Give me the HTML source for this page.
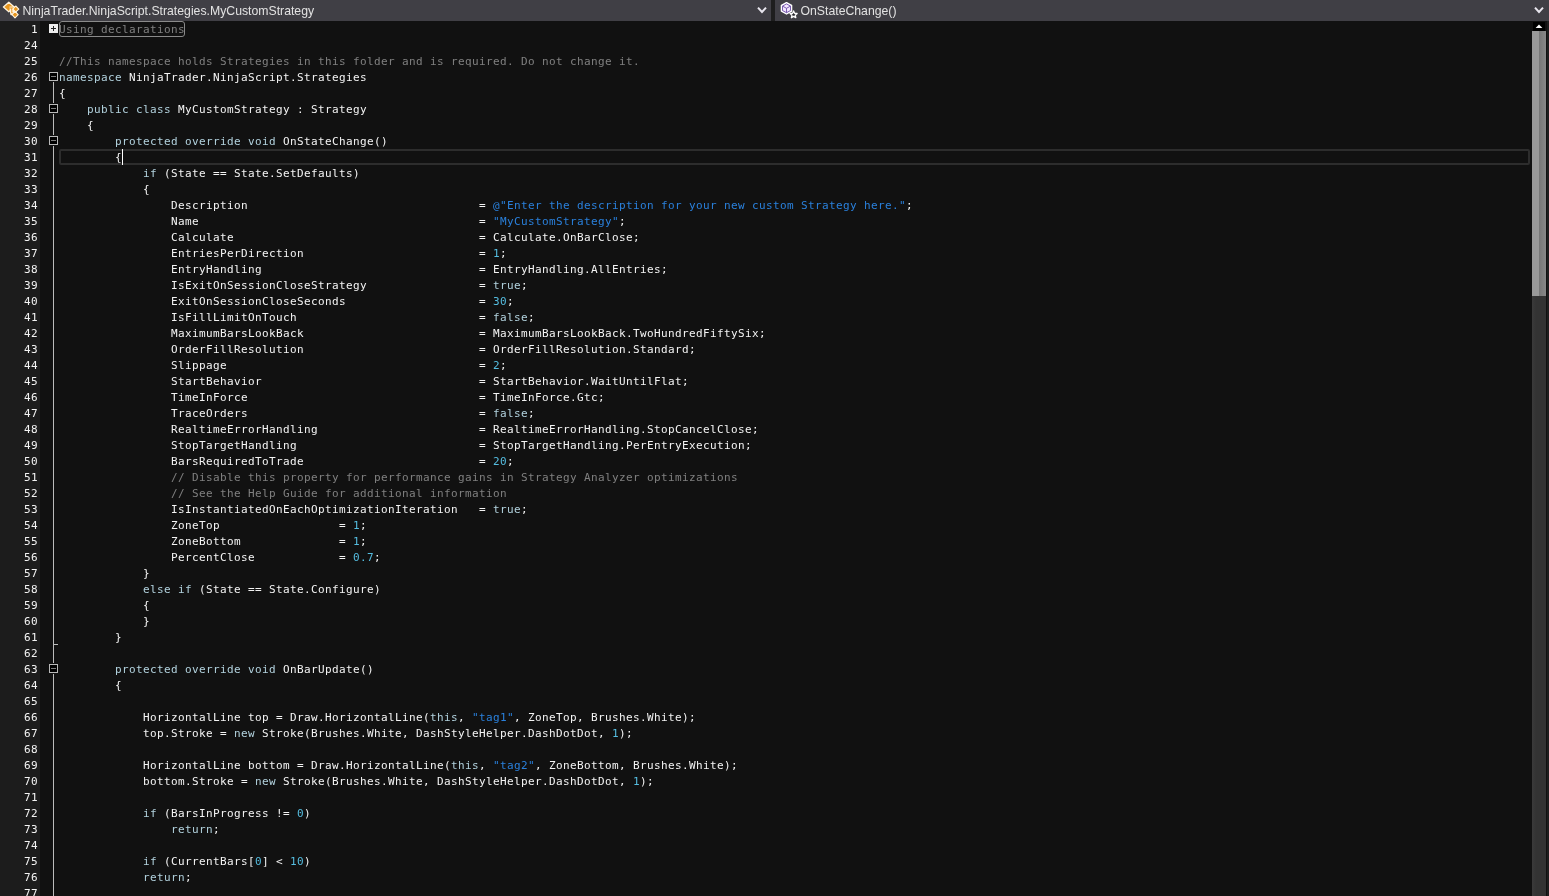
<!DOCTYPE html>
<html><head><meta charset="utf-8"><title>NinjaScript Editor</title>
<style>
html,body{margin:0;padding:0;background:#111;}
body{width:1549px;height:896px;overflow:hidden;position:relative;font-family:"DejaVu Sans Mono","Liberation Mono",monospace;}
#hdr{position:absolute;left:0;top:0;width:1549px;height:21px;background:#403f45;will-change:transform;transform:translateZ(0);}
#hdr .sep{position:absolute;left:771px;top:0;width:4px;height:21px;background:#1e1e1e;}
#hdr svg{position:absolute;left:0;top:0;}
#hdr .t{position:absolute;top:4px;font-family:"Liberation Sans",sans-serif;font-size:12.25px;color:#e2e2e2;line-height:15px;white-space:nowrap;}
#gut{position:absolute;left:0;top:21px;width:40px;height:875px;background:#1c1c1c;}
#ed{position:absolute;left:0;top:22px;width:1532px;will-change:transform;transform:translateZ(0);}
.row{height:16px;line-height:16px;white-space:pre;position:relative;font-size:11px;letter-spacing:0.378px;color:#f4f4f4;}
.ln{position:absolute;left:0;width:38px;text-align:right;color:#f4f4f4;}
.code{position:absolute;left:59px;}
.k{color:#b2d2de}.s{color:#2a80dc}.n{color:#55bde0}.c{color:#808080}
.fold{color:#808080;}
#ubox{position:absolute;left:59px;top:21px;width:124px;height:14px;border:1px solid #8a8a8a;border-radius:3px;}
.fbox{position:absolute;left:49px;width:7px;height:7px;border:1px solid #b8b8b8;background:#000;box-shadow:0 0 0 1px #111;}
.fbox i{position:absolute;left:1px;top:3px;width:5px;height:1px;background:#7c7c7c;}
#fline{position:absolute;left:53px;width:1px;background:#bbb;bottom:0;}
#tick{position:absolute;left:53px;width:5px;height:1px;background:#bbb;}
#pbox{position:absolute;left:49px;top:24px;width:9px;height:9px;background:#eee;}
#pbox:before{content:"";position:absolute;left:2px;top:4px;width:5px;height:1px;background:#222;}
#pbox:after{content:"";position:absolute;left:4px;top:2px;width:1px;height:5px;background:#222;}
#cur{position:absolute;left:59px;width:1467px;height:12px;border:2px solid #2d2d2d;border-radius:2px;}
#caret{position:absolute;left:122px;width:1px;height:16px;background:#fff;}
#sb{position:absolute;left:1532px;top:21px;width:14px;height:875px;background:linear-gradient(90deg,#3a3a3a 0,#333 4px,#333 100%);}
#sb .up{position:absolute;left:1px;top:1px;width:12px;height:9px;background:#000;box-shadow:0 0 0 1px #111;}
#sb .th{position:absolute;left:0;top:10px;width:14px;height:265px;background:linear-gradient(90deg,#999 0,#999 50%,#777 50%,#888 100%);}
#redge{position:absolute;left:1547.3px;top:21px;width:2px;height:875px;background:#1e1e1e;}
</style></head><body>
<div id="hdr">
<svg width="1549" height="21" viewBox="0 0 1549 21">
<g stroke-linejoin="round">
<path d="M8.8 2.3 L14.2 7 L8.8 11.7 L3.4 7 Z" fill="#e8961e" stroke="#fff3dc" stroke-width="1.3"/>
<path d="M10 7.2 H16 V14.5 H11 Z" fill="#fff3dc" stroke="#fff3dc" stroke-width="1.5"/>
<path d="M9 8 H15 M11.8 8 V13 H15" fill="none" stroke="#e8961e" stroke-width="1"/>
<path d="M15.7 6 L18.8 9.1 L15.7 12.2 L12.9 9.1 Z" fill="#e8961e" stroke="#fff3dc" stroke-width="1.1"/>
<path d="M15 11.4 L18.2 14.6 L15 17.8 L12 14.6 Z" fill="#e8961e" stroke="#fff3dc" stroke-width="1.1"/>
</g>
<path d="M758 7.6 L762 12 L766 7.6" fill="none" stroke="#e8e6ee" stroke-width="2"/>
<path d="M1535 7.6 L1539 12 L1543 7.6" fill="none" stroke="#e8e6ee" stroke-width="2"/>
<path d="M786.5 2.4 L791.5 5.2 V10.8 L786.5 13.6 L781.5 10.8 V5.2 Z" fill="#f3e6ff" stroke="#ffffff" stroke-width="1.6" stroke-linejoin="round" transform="translate(0,0.3)"/>
<path d="M786.5 3.6 L790.5 5.8 V10.2 L786.5 12.4 L782.5 10.2 V5.8 Z M782.7 5.9 L786.5 8 L790.3 5.9 M786.5 8 V12.3" fill="none" stroke="#6444a0" stroke-width="0.85" stroke-linejoin="round" transform="translate(0,0.3)"/>
<path d="M793.6 11.2 L794.6 13.6 L797.1 13.8 L795.2 15.5 L795.8 18 L793.6 16.7 L791.4 18 L792 15.5 L790.1 13.8 L792.6 13.6 Z" fill="#2a2a2e" stroke="#ffffff" stroke-width="1.3" transform="translate(0,-0.3)" stroke-linejoin="round"/>
</svg>
<span class="t" style="left:22.5px">NinjaTrader.NinjaScript.Strategies.MyCustomStrategy</span>
<div class="sep"></div>
<span class="t" style="left:800.5px">OnStateChange()</span>
</div>
<div id="gut"></div>
<div id="fline" style="top:82px"></div>
<div id="tick" style="top:644px"></div>
<div class="fbox" style="top:72px"><i></i></div><div class="fbox" style="top:104px"><i></i></div><div class="fbox" style="top:136px"><i></i></div><div class="fbox" style="top:664px"><i></i></div>
<div id="pbox"></div>
<div id="ubox"></div>
<div id="cur" style="top:149px"></div>
<div id="ed">
<div class="row"><span class="ln">1</span><span class="code"><span class="fold">Using declarations</span></span></div>
<div class="row"><span class="ln">24</span><span class="code"></span></div>
<div class="row"><span class="ln">25</span><span class="code"><span class="c">//This namespace holds Strategies in this folder and is required. Do not change it.</span></span></div>
<div class="row"><span class="ln">26</span><span class="code"><span class="k">namespace</span> NinjaTrader.NinjaScript.Strategies</span></div>
<div class="row"><span class="ln">27</span><span class="code">{</span></div>
<div class="row"><span class="ln">28</span><span class="code">    <span class="k">public</span> <span class="k">class</span> MyCustomStrategy : Strategy</span></div>
<div class="row"><span class="ln">29</span><span class="code">    {</span></div>
<div class="row"><span class="ln">30</span><span class="code">        <span class="k">protected</span> <span class="k">override</span> <span class="k">void</span> OnStateChange()</span></div>
<div class="row"><span class="ln">31</span><span class="code">        {</span></div>
<div class="row"><span class="ln">32</span><span class="code">            <span class="k">if</span> (State == State.SetDefaults)</span></div>
<div class="row"><span class="ln">33</span><span class="code">            {</span></div>
<div class="row"><span class="ln">34</span><span class="code">                Description                                 = <span class="s">@&quot;Enter the description for your new custom Strategy here.&quot;</span>;</span></div>
<div class="row"><span class="ln">35</span><span class="code">                Name                                        = <span class="s">&quot;MyCustomStrategy&quot;</span>;</span></div>
<div class="row"><span class="ln">36</span><span class="code">                Calculate                                   = Calculate.OnBarClose;</span></div>
<div class="row"><span class="ln">37</span><span class="code">                EntriesPerDirection                         = <span class="n">1</span>;</span></div>
<div class="row"><span class="ln">38</span><span class="code">                EntryHandling                               = EntryHandling.AllEntries;</span></div>
<div class="row"><span class="ln">39</span><span class="code">                IsExitOnSessionCloseStrategy                = <span class="k">true</span>;</span></div>
<div class="row"><span class="ln">40</span><span class="code">                ExitOnSessionCloseSeconds                   = <span class="n">30</span>;</span></div>
<div class="row"><span class="ln">41</span><span class="code">                IsFillLimitOnTouch                          = <span class="k">false</span>;</span></div>
<div class="row"><span class="ln">42</span><span class="code">                MaximumBarsLookBack                         = MaximumBarsLookBack.TwoHundredFiftySix;</span></div>
<div class="row"><span class="ln">43</span><span class="code">                OrderFillResolution                         = OrderFillResolution.Standard;</span></div>
<div class="row"><span class="ln">44</span><span class="code">                Slippage                                    = <span class="n">2</span>;</span></div>
<div class="row"><span class="ln">45</span><span class="code">                StartBehavior                               = StartBehavior.WaitUntilFlat;</span></div>
<div class="row"><span class="ln">46</span><span class="code">                TimeInForce                                 = TimeInForce.Gtc;</span></div>
<div class="row"><span class="ln">47</span><span class="code">                TraceOrders                                 = <span class="k">false</span>;</span></div>
<div class="row"><span class="ln">48</span><span class="code">                RealtimeErrorHandling                       = RealtimeErrorHandling.StopCancelClose;</span></div>
<div class="row"><span class="ln">49</span><span class="code">                StopTargetHandling                          = StopTargetHandling.PerEntryExecution;</span></div>
<div class="row"><span class="ln">50</span><span class="code">                BarsRequiredToTrade                         = <span class="n">20</span>;</span></div>
<div class="row"><span class="ln">51</span><span class="code">                <span class="c">// Disable this property for performance gains in Strategy Analyzer optimizations</span></span></div>
<div class="row"><span class="ln">52</span><span class="code">                <span class="c">// See the Help Guide for additional information</span></span></div>
<div class="row"><span class="ln">53</span><span class="code">                IsInstantiatedOnEachOptimizationIteration   = <span class="k">true</span>;</span></div>
<div class="row"><span class="ln">54</span><span class="code">                ZoneTop                 = <span class="n">1</span>;</span></div>
<div class="row"><span class="ln">55</span><span class="code">                ZoneBottom              = <span class="n">1</span>;</span></div>
<div class="row"><span class="ln">56</span><span class="code">                PercentClose            = <span class="n">0.7</span>;</span></div>
<div class="row"><span class="ln">57</span><span class="code">            }</span></div>
<div class="row"><span class="ln">58</span><span class="code">            <span class="k">else</span> <span class="k">if</span> (State == State.Configure)</span></div>
<div class="row"><span class="ln">59</span><span class="code">            {</span></div>
<div class="row"><span class="ln">60</span><span class="code">            }</span></div>
<div class="row"><span class="ln">61</span><span class="code">        }</span></div>
<div class="row"><span class="ln">62</span><span class="code"></span></div>
<div class="row"><span class="ln">63</span><span class="code">        <span class="k">protected</span> <span class="k">override</span> <span class="k">void</span> OnBarUpdate()</span></div>
<div class="row"><span class="ln">64</span><span class="code">        {</span></div>
<div class="row"><span class="ln">65</span><span class="code"></span></div>
<div class="row"><span class="ln">66</span><span class="code">            HorizontalLine top = Draw.HorizontalLine(<span class="k">this</span>, <span class="s">&quot;tag1&quot;</span>, ZoneTop, Brushes.White);</span></div>
<div class="row"><span class="ln">67</span><span class="code">            top.Stroke = <span class="k">new</span> Stroke(Brushes.White, DashStyleHelper.DashDotDot, <span class="n">1</span>);</span></div>
<div class="row"><span class="ln">68</span><span class="code"></span></div>
<div class="row"><span class="ln">69</span><span class="code">            HorizontalLine bottom = Draw.HorizontalLine(<span class="k">this</span>, <span class="s">&quot;tag2&quot;</span>, ZoneBottom, Brushes.White);</span></div>
<div class="row"><span class="ln">70</span><span class="code">            bottom.Stroke = <span class="k">new</span> Stroke(Brushes.White, DashStyleHelper.DashDotDot, <span class="n">1</span>);</span></div>
<div class="row"><span class="ln">71</span><span class="code"></span></div>
<div class="row"><span class="ln">72</span><span class="code">            <span class="k">if</span> (BarsInProgress != <span class="n">0</span>)</span></div>
<div class="row"><span class="ln">73</span><span class="code">                <span class="k">return</span>;</span></div>
<div class="row"><span class="ln">74</span><span class="code"></span></div>
<div class="row"><span class="ln">75</span><span class="code">            <span class="k">if</span> (CurrentBars[<span class="n">0</span>] &lt; <span class="n">10</span>)</span></div>
<div class="row"><span class="ln">76</span><span class="code">            <span class="k">return</span>;</span></div>
<div class="row"><span class="ln">77</span><span class="code"></span></div>
</div>
<div id="caret" style="top:149px"></div>
<div id="sb"><div class="up"><svg width="12" height="9" viewBox="0 0 12 9" style="position:absolute;left:0;top:0"><path d="M6 2.6 L9.4 6.1 H2.6 Z" fill="#ffffff"/></svg></div><div class="th"></div></div>
<div id="redge"></div>
</body></html>
